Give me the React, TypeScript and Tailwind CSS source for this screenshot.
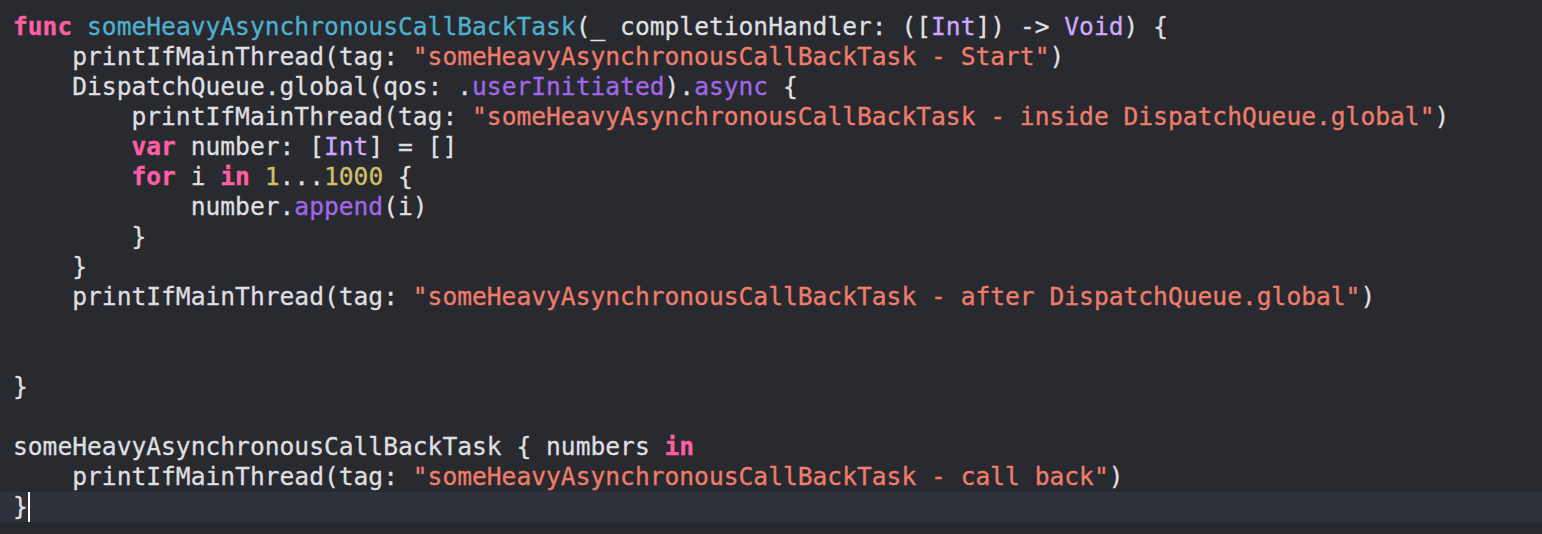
import React from "react";

type Tok = [string, string?];

const K = "text-[#fc5fa3] font-bold";
const S = "text-[#ef7d6b]";
const F = "text-[#4eb0cc]";
const T = "text-[#d0a8ff]";
const M = "text-[#a167e6]";
const N = "text-[#d0bf69]";

const lines: Tok[][] = [
  [["func", K], [" "], ["someHeavyAsynchronousCallBackTask", F], ["(_ completionHandler: (["], ["Int", T], ["]) -> "], ["Void", T], [") {"]],
  [["    printIfMainThread(tag: "], ['"someHeavyAsynchronousCallBackTask - Start"', S], [")"]],
  [["    DispatchQueue.global(qos: ."], ["userInitiated", M], [")."], ["async", M], [" {"]],
  [["        printIfMainThread(tag: "], ['"someHeavyAsynchronousCallBackTask - inside DispatchQueue.global"', S], [")"]],
  [["        "], ["var", K], [" number: ["], ["Int", T], ["] = []"]],
  [["        "], ["for", K], [" i "], ["in", K], [" "], ["1", N], ["..."], ["1000", N], [" {"]],
  [["            number."], ["append", M], ["(i)"]],
  [["        }"]],
  [["    }"]],
  [["    printIfMainThread(tag: "], ['"someHeavyAsynchronousCallBackTask - after DispatchQueue.global"', S], [")"]],
  [[""]],
  [[""]],
  [["}"]],
  [[""]],
  [["someHeavyAsynchronousCallBackTask { numbers "], ["in", K]],
  [["    printIfMainThread(tag: "], ['"someHeavyAsynchronousCallBackTask - call back"', S], [")"]],
  [["}"]],
];

export default function App() {
  return (
    <div
      className="w-[1542px] h-[534px] bg-[#292a30] py-[12px] overflow-hidden text-[#dfdfe0] text-[24.6px] [-webkit-text-stroke:0.3px_currentColor]"
      style={{ fontFamily: '"DejaVu Sans Mono", "Liberation Mono", monospace' }}
    >
      {lines.map((l, i) => {
        const last = i === lines.length - 1;
        return (
          <div
            key={i}
            className={`h-[30px] leading-[30px] pl-[13px] whitespace-pre flex items-center ${last ? "bg-[#2f323a]" : ""}`}
          >
            <span>
              {l.map((t, j) => (
                <span key={j} className={t[1] ?? ""}>
                  {t[0]}
                </span>
              ))}
            </span>
            {last && <span className="inline-block w-[2px] h-[30px] bg-white" />}
          </div>
        );
      })}
    </div>
  );
}
